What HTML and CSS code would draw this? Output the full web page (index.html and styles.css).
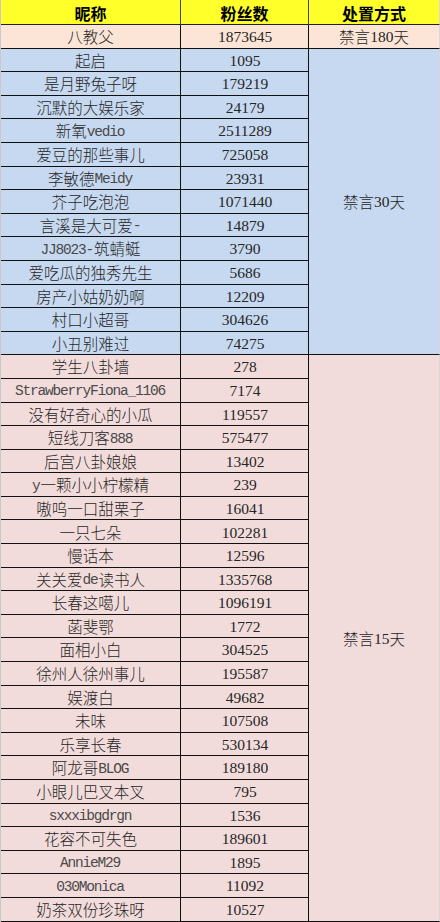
FILE: index.html
```html
<!DOCTYPE html>
<html lang="zh-CN">
<head>
<meta charset="utf-8">
<title>处置名单</title>
<link rel="stylesheet" href="styles.css">
</head>
<body>
<div class="sheet">
  <div class="cell head">昵称</div>
  <div class="cell head">粉丝数</div>
  <div class="cell head last">处置方式</div>

  <div class="cell peach">八教父</div>
  <div class="cell peach num">1873645</div>
  <div class="cell peach last">禁言<span class="dig">180</span>天</div>

  <div class="cell blue">起启</div>
  <div class="cell blue num">1095</div>
  <div class="cell blue last span13">禁言<span class="dig">30</span>天</div>
  <div class="cell blue">是月野兔子呀</div><div class="cell blue num">179219</div>
  <div class="cell blue">沉默的大娱乐家</div><div class="cell blue num">24179</div>
  <div class="cell blue">新氧<span class="lat">vedio</span></div><div class="cell blue num">2511289</div>
  <div class="cell blue">爱豆的那些事儿</div><div class="cell blue num">725058</div>
  <div class="cell blue">李敏德<span class="lat">Meidy</span></div><div class="cell blue num">23931</div>
  <div class="cell blue">芥子吃泡泡</div><div class="cell blue num">1071440</div>
  <div class="cell blue">言溪是大可爱<span class="lat">-</span></div><div class="cell blue num">14879</div>
  <div class="cell blue"><span class="lat">JJ8023-</span>筑蜻蜓</div><div class="cell blue num">3790</div>
  <div class="cell blue">爱吃瓜的独秀先生</div><div class="cell blue num">5686</div>
  <div class="cell blue">房产小姑奶奶啊</div><div class="cell blue num">12209</div>
  <div class="cell blue">村口小超哥</div><div class="cell blue num">304626</div>
  <div class="cell blue">小丑别难过</div><div class="cell blue num">74275</div>

  <div class="cell pink">学生八卦墙</div>
  <div class="cell pink num">278</div>
  <div class="cell pink last span24">禁言<span class="dig">15</span>天</div>
  <div class="cell pink"><span class="lat">StrawberryFiona_1106</span></div><div class="cell pink num">7174</div>
  <div class="cell pink">没有好奇心的小瓜</div><div class="cell pink num">119557</div>
  <div class="cell pink">短线刀客<span class="lat">888</span></div><div class="cell pink num">575477</div>
  <div class="cell pink">后宫八卦娘娘</div><div class="cell pink num">13402</div>
  <div class="cell pink"><span class="lat">y</span>一颗小小柠檬精</div><div class="cell pink num">239</div>
  <div class="cell pink">嗷呜一口甜栗子</div><div class="cell pink num">16041</div>
  <div class="cell pink">一只七朵</div><div class="cell pink num">102281</div>
  <div class="cell pink">慢话本</div><div class="cell pink num">12596</div>
  <div class="cell pink">关关爱<span class="lat">de</span>读书人</div><div class="cell pink num">1335768</div>
  <div class="cell pink">长春这噶儿</div><div class="cell pink num">1096191</div>
  <div class="cell pink">菡斐鄂</div><div class="cell pink num">1772</div>
  <div class="cell pink">面相小白</div><div class="cell pink num">304525</div>
  <div class="cell pink">徐州人徐州事儿</div><div class="cell pink num">195587</div>
  <div class="cell pink">娱渡白</div><div class="cell pink num">49682</div>
  <div class="cell pink">未味</div><div class="cell pink num">107508</div>
  <div class="cell pink">乐享长春</div><div class="cell pink num">530134</div>
  <div class="cell pink">阿龙哥<span class="lat">BLOG</span></div><div class="cell pink num">189180</div>
  <div class="cell pink">小眼儿巴叉本叉</div><div class="cell pink num">795</div>
  <div class="cell pink"><span class="lat">sxxxibgdrgn</span></div><div class="cell pink num">1536</div>
  <div class="cell pink">花容不可失色</div><div class="cell pink num">189601</div>
  <div class="cell pink"><span class="lat">AnnieM29</span></div><div class="cell pink num">1895</div>
  <div class="cell pink"><span class="lat">030Monica</span></div><div class="cell pink num">11092</div>
  <div class="cell pink">奶茶双份珍珠呀</div><div class="cell pink num">10527</div>
</div>
</body>
</html>
```
FILE: styles.css
```css
html, body {
  margin: 0;
  padding: 0;
  background: #f2dcdb;
}

.sheet {
  width: 440px;
  box-sizing: border-box;
  border-left: 1px solid #c9c9c9;
  display: grid;
  grid-template-columns: 180px 128px 131px;
  grid-template-rows: 25px;
  grid-auto-rows: 23.6px;
  font-family: "Noto Sans CJK SC", "Noto Sans", sans-serif;
  font-size: 15.5px;
  font-weight: 300;
  color: #262626;
}

.cell {
  box-sizing: border-box;
  display: flex;
  align-items: center;
  justify-content: center;
  border-right: 1px solid #111;
  border-bottom: 1px solid #111;
  white-space: nowrap;
  line-height: 1;
  padding-top: 1px;
}

.cell.last {
  border-right: 1px solid #d7d7d7;
}

.head {
  background: #ffff2a;
  font-weight: 700;
  font-size: 16px;
  color: #000;
  border-right-color: #444;
  border-bottom-color: #222;
}

.peach { background: #fce5d7; }
.blue  { background: #c6d9f0; }
.pink  { background: #f2dcdb; }

.span13 { grid-row: span 13; }
.span24 { grid-row: span 24; }

.num,
.dig {
  font-family: "Liberation Serif", "DejaVu Serif", serif;
  font-weight: 400;
  font-size: 15.5px;
}

.num {
  padding-left: 1px;
}

.lat {
  font-family: "Liberation Mono", "DejaVu Sans Mono", monospace;
  font-weight: 400;
  font-size: 14.5px;
  letter-spacing: -1.2px;
  color: #4a4a4a;
  margin-right: 1px;
  position: relative;
  top: 1px;
}
```
